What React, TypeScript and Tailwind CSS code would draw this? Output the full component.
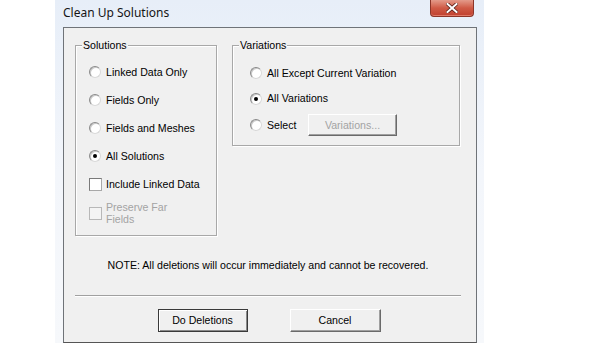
import React from "react";

// ─── Small classic controls ────────────────────────────────────────────────────

function Radio({ checked = false }: { checked?: boolean }) {
  return (
    <span className="w-[12px] h-[12px] rounded-full border border-t-[#8a8a8a] border-l-[#8a8a8a] border-r-[#d8d8d8] border-b-[#d8d8d8] bg-white flex items-center justify-center shrink-0 shadow-[inset_1px_1px_0_#c8c8c8]">
      {checked && <span className="w-[4px] h-[4px] rounded-full bg-black" />}
    </span>
  );
}

function Check({ disabled = false }: { disabled?: boolean }) {
  return (
    <span
      className={
        disabled
          ? "w-[13px] h-[13px] border border-[#b8b8b8] bg-[#f4f4f4] shrink-0"
          : "w-[13px] h-[13px] border border-t-[#7a7a7a] border-l-[#7a7a7a] border-r-[#a8a8a8] border-b-[#a8a8a8] bg-white shrink-0"
      }
    />
  );
}

function Group({ label, className, children }: { label: string; className: string; children: React.ReactNode }) {
  return (
    <div className={"relative border border-[#a8a8a8] shadow-[1px_1px_0_#ffffff,inset_1px_1px_0_#ffffff] " + className}>
      <span className="absolute -top-[7px] left-[6px] px-[1px] bg-[#f0f0f0] leading-[13px]">{label}</span>
      {children}
    </div>
  );
}

function Button({ label, primary = false, disabled = false }: { label: string; primary?: boolean; disabled?: boolean }) {
  return (
    <div
      className={
        "flex-1 flex items-center justify-center bg-[#f0f0f0] border " +
        (primary
          ? "border-[#3a3a3a] shadow-[inset_1px_1px_0_#ffffff,inset_-1px_-1px_0_#8a8a8a]"
          : "border-t-[#ffffff] border-l-[#ffffff] border-r-[#6a6a6a] border-b-[#6a6a6a] shadow-[inset_-1px_-1px_0_#a0a0a0]") +
        (disabled ? " text-[#a3a3a3]" : " text-black")
      }
    >
      {label}
    </div>
  );
}

// ─── Dialog ───────────────────────────────────────────────────────────────────

export default function App() {
  return (
    <div className="w-[600px] h-[343px] bg-white flex overflow-hidden">
      {/* Aero frame */}
      <div className="ml-[55px] w-[429px] h-[343px] flex flex-col bg-gradient-to-b from-[#e7eef8] via-[#f3f6fb] to-[#f6f8fb]">
        {/* Title bar */}
        <div className="h-[27px] flex items-start shrink-0">
          <span className="pl-[8px] pt-[5px] text-[12px] leading-[16px] text-[#151515] [font-family:'Noto_Sans','Open_Sans',sans-serif]">
            Clean Up Solutions
          </span>
          <div className="ml-auto mr-[10px] w-[44px] h-[17px] rounded-b-[4px] border border-t-0 border-[#8c3528] bg-gradient-to-b from-[#e39a8a] via-[#cf5a45] to-[#c0402f] flex items-center justify-center shadow-[inset_0_-1px_0_#e07a68]">
            <svg width="12" height="10" viewBox="0 0 12 10">
              <path d="M1.5 1 L10.5 9 M10.5 1 L1.5 9" stroke="#5a2018" strokeWidth="3.6" strokeLinecap="square" />
              <path d="M1.5 1 L10.5 9 M10.5 1 L1.5 9" stroke="#ffffff" strokeWidth="2" strokeLinecap="square" />
            </svg>
          </div>
        </div>

        {/* Client area */}
        <div className="ml-[8px] w-[414px] flex-1 border border-[#6f7378] border-b-[#555] bg-[#f0f0f0] text-[10.6px] leading-[13px] text-black [font-family:'Liberation_Sans',Arial,sans-serif] flex flex-col pl-[11px] pr-[15px]">
          <div className="flex items-start gap-[15px] mt-[17px]">
            <Group label="Solutions" className="w-[142px] h-[191px] pl-[13px] pt-[12px] flex flex-col">
              <div className="h-[28px] flex items-center gap-[5px]"><Radio /><span>Linked Data Only</span></div>
              <div className="h-[28px] flex items-center gap-[5px]"><Radio /><span>Fields Only</span></div>
              <div className="h-[28px] flex items-center gap-[5px]"><Radio /><span>Fields and Meshes</span></div>
              <div className="h-[28px] flex items-center gap-[5px]"><Radio checked /><span>All Solutions</span></div>
              <div className="h-[28px] flex items-center gap-[4px]"><Check /><span>Include Linked Data</span></div>
              <div className="h-[30px] flex items-center gap-[4px] text-[#a3a3a3]">
                <Check disabled />
                <span className="leading-[12px]">Preserve Far<br />Fields</span>
              </div>
            </Group>

            <Group label="Variations" className="w-[228px] h-[101px] pl-[17px] pt-[14px] flex flex-col">
              <div className="h-[26px] flex items-center gap-[5px]"><Radio /><span>All Except Current Variation</span></div>
              <div className="h-[25px] flex items-center gap-[5px]"><Radio checked /><span>All Variations</span></div>
              <div className="h-[28px] flex items-center gap-[5px]">
                <Radio />
                <span className="w-[36px]">Select</span>
                <div className="w-[89px] h-[22px] flex">
                  <Button label="Variations..." disabled />
                </div>
              </div>
            </Group>
          </div>

          <p className="mt-[23px] text-center">NOTE: All deletions will occur immediately and cannot be recovered.</p>

          <div className="mt-[23px] h-[2px] border-t border-[#a0a0a0] border-b border-b-white" />

          <div className="mt-[12px] flex justify-center gap-[42px] pl-[2px]">
            <div className="w-[90px] h-[23px] flex"><Button label="Do Deletions" primary /></div>
            <div className="w-[91px] h-[23px] flex"><Button label="Cancel" /></div>
          </div>
        </div>
      </div>
    </div>
  );
}
